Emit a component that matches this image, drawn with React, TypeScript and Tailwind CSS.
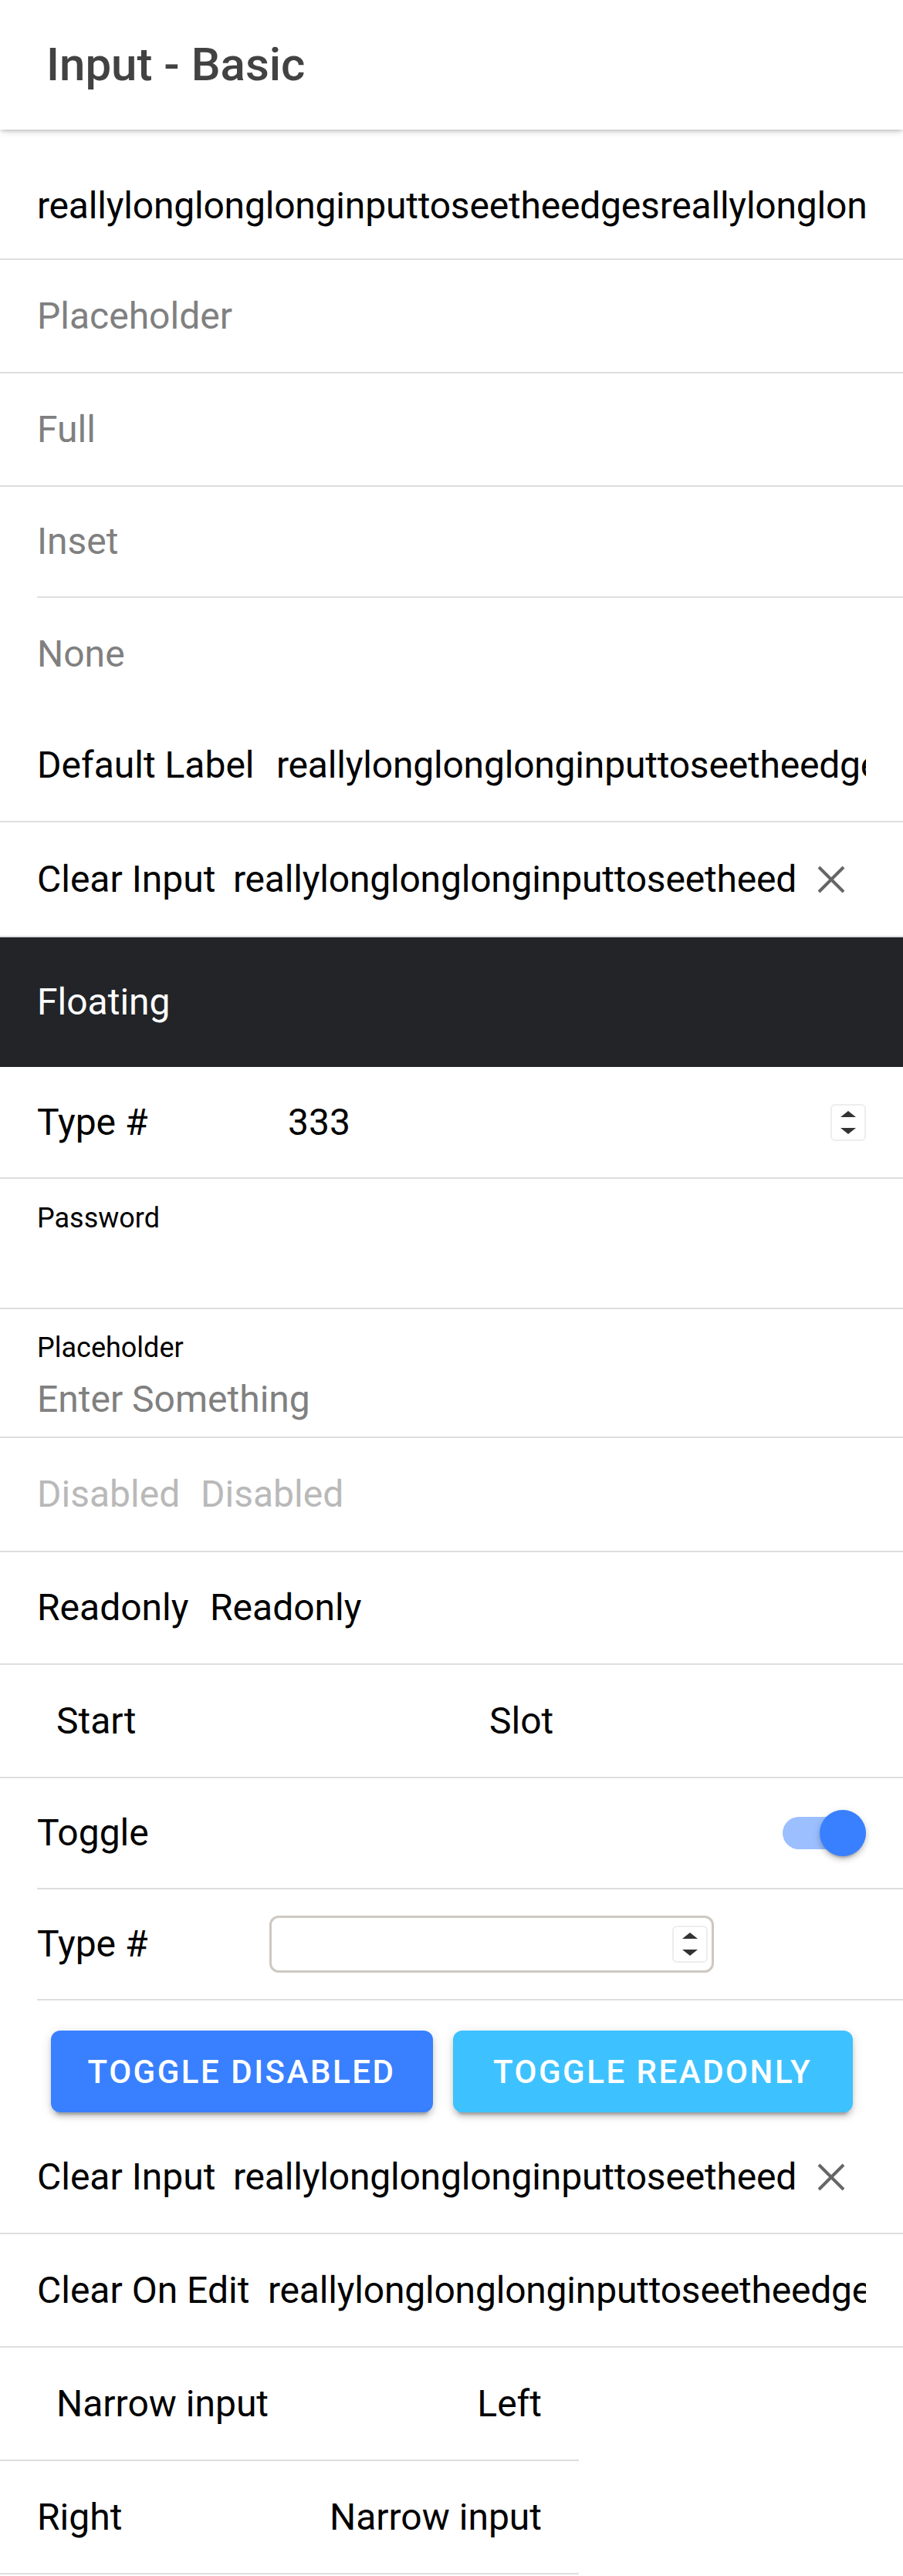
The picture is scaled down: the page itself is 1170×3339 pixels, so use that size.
import type { ReactNode } from "react";

const LONG = "reallylonglonglonginputtoseetheedgesreallylonglonglonginputtoseetheedges";

// 清除按钮的 X
function ClearIcon() {
  return (
    <svg viewBox="0 0 38 38" className="w-[38px] h-[38px]" fill="none" stroke="#666666" strokeWidth={4}>
      <path d="M3 3 L35 35 M35 3 L3 35" />
    </svg>
  );
}

// 数字输入框的上下箭头
function Spinner() {
  return (
    <div className="w-[46px] h-[48px] rounded-[6px] border-2 border-[#ededed] flex flex-col items-center justify-center gap-[14px]">
      <svg width="20" height="8" viewBox="0 0 20 8">
        <path d="M0 8 L10 0 L20 8 Z" fill="#333333" />
      </svg>
      <svg width="20" height="8" viewBox="0 0 20 8">
        <path d="M0 0 L20 0 L10 8 Z" fill="#333333" />
      </svg>
    </div>
  );
}

function Row({ children, className = "" }: { children: ReactNode; className?: string }) {
  return (
    <div className={`flex items-center pl-12 pr-12 border-b-2 border-[#dedede] ${className}`}>{children}</div>
  );
}

function InsetRow({ children, className = "" }: { children: ReactNode; className?: string }) {
  return (
    <div className={`pl-12 ${className}`}>
      <div className="h-full flex items-center pr-12 border-b-2 border-[#dedede]">{children}</div>
    </div>
  );
}

// 超长输入值被裁掉
function Clip({ children, className = "" }: { children: ReactNode; className?: string }) {
  return <div className={`overflow-hidden whitespace-nowrap tracking-[-0.2px] ${className}`}>{children}</div>;
}

function ClearRow({ height }: { height: string }) {
  return (
    <Row className={`${height} pr-0`}>
      <span className="w-[254px] shrink-0">Clear Input</span>
      <Clip className="w-[730px]">{LONG}</Clip>
      <div className="w-[90px] flex justify-center">
        <ClearIcon />
      </div>
    </Row>
  );
}

export default function App() {
  return (
    <div className="w-[1170px] min-h-[3339px] bg-white text-black text-[48px] font-['Roboto','Liberation_Sans',sans-serif]">
      {/* 顶部标题栏 */}
      <header className="relative z-10 h-[168px] flex items-center pl-[60px] bg-white shadow-[0_4px_8px_-2px_rgba(0,0,0,0.22),0_2px_3px_rgba(0,0,0,0.08)]">
        <h1 className="text-[60px] font-medium text-[#424242]">Input - Basic</h1>
      </header>

      <Row className="h-[169px] pt-[30px]">
        <Clip className="flex-1">{LONG}</Clip>
      </Row>
      <Row className="h-[147px] text-[#808080]">Placeholder</Row>
      <Row className="h-[147px] text-[#808080]">Full</Row>
      <InsetRow className="h-[144px] text-[#808080]">Inset</InsetRow>
      <div className="h-[145px] flex items-center pl-12 text-[#808080]">None</div>

      <Row className="h-[146px]">
        <span className="w-[310px] shrink-0">Default Label</span>
        <Clip className="flex-1">{LONG}</Clip>
      </Row>
      <ClearRow height="h-[149px]" />

      {/* Floating */}
      <div className="h-[168px] flex items-center pl-12 bg-[#222428] text-white">Floating</div>

      <Row className="h-[145px]">
        <span className="w-[325px] shrink-0">Type #</span>
        <span className="flex-1">333</span>
        <Spinner />
      </Row>

      <div className="h-[169px] pl-12 pt-[24px] border-b-2 border-[#dedede]">
        <div className="text-[36px]">Password</div>
      </div>
      <div className="h-[167px] pl-12 pt-[23px] border-b-2 border-[#dedede]">
        <div className="text-[36px]">Placeholder</div>
        <div className="mt-[4px] text-[#808080]">Enter Something</div>
      </div>

      <Row className="h-[148px] text-[#b9b9b9]">
        <span className="w-[212px] shrink-0">Disabled</span>
        <span>Disabled</span>
      </Row>
      <Row className="h-[146px]">
        <span className="w-[224px] shrink-0">Readonly</span>
        <span>Readonly</span>
      </Row>
      <Row className="h-[147px] pl-[73px]">
        <span className="w-[561px] shrink-0">Start</span>
        <span>Slot</span>
      </Row>

      <InsetRow className="h-[144px]">
        <span className="flex-1">Toggle</span>
        <div className="relative w-[108px] h-[60px] flex items-center">
          <div className="w-full h-[42px] rounded-full bg-[#9cbfff]" />
          <div className="absolute right-0 top-0 w-[60px] h-[60px] rounded-full bg-[#3880ff] shadow-[0_6px_3px_-4px_rgba(0,0,0,0.2),0_4px_6px_rgba(0,0,0,0.14),0_3px_12px_rgba(0,0,0,0.12)]" />
        </div>
      </InsetRow>
      <InsetRow className="h-[144px]">
        <span className="w-[301px] shrink-0">Type #</span>
        <div className="w-[576px] h-[74px] rounded-[12px] border-[3px] border-[#cdc8c2] flex items-center justify-end pr-[5px]">
          <Spinner />
        </div>
      </InsetRow>

      {/* 按钮 */}
      <div className="h-[157px] pt-[39px] flex justify-center gap-[26px]">
        <button className="w-[495px] h-[106px] rounded-[12px] bg-[#3880ff] text-white text-[42px] font-medium tracking-[0.06em] shadow-[0_9px_3px_-6px_rgba(0,0,0,0.2),0_6px_6px_rgba(0,0,0,0.14),0_3px_15px_rgba(0,0,0,0.12)]">
          TOGGLE DISABLED
        </button>
        <button className="w-[518px] h-[106px] rounded-[12px] bg-[#3dc2ff] text-white text-[42px] font-medium tracking-[0.06em] shadow-[0_9px_3px_-6px_rgba(0,0,0,0.2),0_6px_6px_rgba(0,0,0,0.14),0_3px_15px_rgba(0,0,0,0.12)]">
          TOGGLE READONLY
        </button>
      </div>

      <ClearRow height="h-[146px]" />
      <Row className="h-[147px]">
        <span className="w-[299px] shrink-0">Clear On Edit</span>
        <Clip className="flex-1">{LONG}</Clip>
      </Row>

      <Row className="h-[147px] w-[750px] pl-[73px]">
        <span className="shrink-0">Narrow input</span>
        <span className="flex-1 text-right">Left</span>
      </Row>
      <Row className="h-[147px] w-[750px]">
        <span className="shrink-0">Right</span>
        <span className="flex-1 text-right">Narrow input</span>
      </Row>
    </div>
  );
}
